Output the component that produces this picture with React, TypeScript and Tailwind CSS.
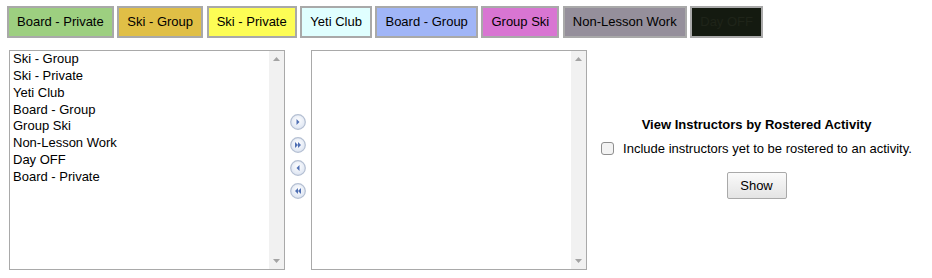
import React from "react";

const activities = [
  { name: "Board - Private", bg: "bg-[#9dcf80]", text: "text-black" },
  { name: "Ski - Group", bg: "bg-[#e0bf46]", text: "text-black" },
  { name: "Ski - Private", bg: "bg-[#fdfd55]", text: "text-black" },
  { name: "Yeti Club", bg: "bg-[#e0ffff]", text: "text-black" },
  { name: "Board - Group", bg: "bg-[#a0b5f7]", text: "text-black" },
  { name: "Group Ski", bg: "bg-[#d875d2]", text: "text-black" },
  { name: "Non-Lesson Work", bg: "bg-[#958f9b]", text: "text-black" },
  { name: "Day OFF", bg: "bg-[#141a10]", text: "text-[#1f2419]" },
];

const available = [
  "Ski - Group",
  "Ski - Private",
  "Yeti Club",
  "Board - Group",
  "Group Ski",
  "Non-Lesson Work",
  "Day OFF",
  "Board - Private",
];

const Scrollbar: React.FC = () => (
  <div className="w-[15px] bg-[#f1f1f1] flex flex-col justify-between items-center py-[6px]">
    <svg width="7" height="4" viewBox="0 0 7 4">
      <polygon points="3.5,0 7,4 0,4" fill="#a3a3a3" />
    </svg>
    <svg width="7" height="4" viewBox="0 0 7 4">
      <polygon points="0,0 7,0 3.5,4" fill="#a3a3a3" />
    </svg>
  </div>
);

const ListBox: React.FC<{ items: string[] }> = ({ items }) => (
  <div className="w-[276px] h-[220px] border border-[#a9a9a9] flex bg-white">
    <div className="flex-1 pl-[3px]">
      {items.map((item) => (
        <div key={item} className="leading-[16.85px] text-[13px] text-black">
          {item}
        </div>
      ))}
    </div>
    <Scrollbar />
  </div>
);

const MoveIcon: React.FC<{ dir: "right" | "left"; double?: boolean }> = ({ dir, double }) => {
  const id = `g-${dir}-${double ? 2 : 1}`;
  const tri = (x: number) =>
    dir === "right"
      ? `${x},5 ${x + 3},8 ${x},11`
      : `${x + 3},5 ${x},8 ${x + 3},11`;
  return (
    <svg width="16" height="16" viewBox="0 0 16 16">
      <defs>
        <radialGradient id={id} cx="50%" cy="40%" r="60%">
          <stop offset="0%" stopColor="#ffffff" />
          <stop offset="100%" stopColor="#dbe3f1" />
        </radialGradient>
      </defs>
      <circle cx="8" cy="8" r="7.3" fill={`url(#${id})`} stroke="#b4bfd2" strokeWidth="1.2" />
      {double ? (
        <>
          <polygon points={tri(5)} fill="#4f6fb3" />
          <polygon points={tri(8)} fill="#4f6fb3" />
        </>
      ) : (
        <polygon points={tri(6.5)} fill="#4f6fb3" />
      )}
    </svg>
  );
};

const App: React.FC = () => {
  return (
    <div className="w-[932px] h-[278px] bg-white font-['Liberation_Sans',Arial,sans-serif] text-[13px] text-black">
      <div className="flex gap-[3.6px] pl-[7px] pt-[6px]">
        {activities.map((a) => (
          <div
            key={a.name}
            className={`h-[32px] border-2 border-[#a9a9a9] px-2 flex items-center ${a.bg} ${a.text}`}
          >
            {a.name}
          </div>
        ))}
      </div>

      <div className="flex items-center pl-[9px] mt-[12px]">
        <ListBox items={available} />
        <div className="w-[26px] self-stretch flex flex-col items-center gap-[7px] pt-[64px]">
          <MoveIcon dir="right" />
          <MoveIcon dir="right" double />
          <MoveIcon dir="left" />
          <MoveIcon dir="left" double />
        </div>
        <ListBox items={[]} />

        <div className="flex-1 flex flex-col items-center pr-[6px] pb-[5px]">
          <div className="font-bold leading-[17px]">View Instructors by Rostered Activity</div>
          <label className="flex items-center mt-[7px]">
            <span className="w-[13px] h-[13px] rounded-[3px] border border-[#8f8f8f] bg-[#f3f3f3] inline-block" />
            <span className="ml-[9px] leading-[17px]">
              Include instructors yet to be rostered to an activity.
            </span>
          </label>
          <button className="mt-[15px] w-[60px] h-[27px] border border-[#a9a9a9] rounded-[2px] bg-gradient-to-b from-[#fafafa] to-[#e4e4e4] text-[13px] text-black">
            Show
          </button>
        </div>
      </div>
    </div>
  );
};

export default App;
